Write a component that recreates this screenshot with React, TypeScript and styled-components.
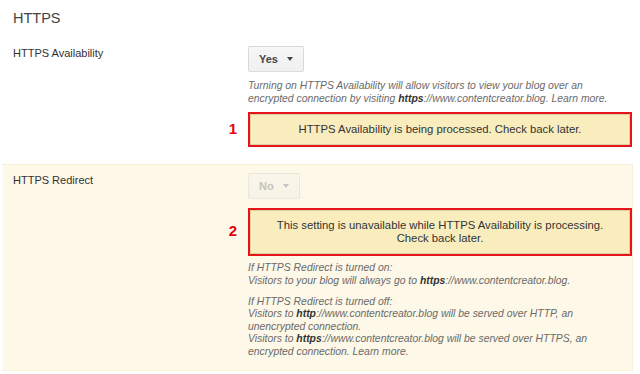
import React, { FC, ReactNode } from 'react'
import styled, { createGlobalStyle } from 'styled-components'

const GlobalStyle = createGlobalStyle`
    body {
        margin: 0;
        background: #fff;
        font-family: "Liberation Sans", Arial, sans-serif;
    }
`

const Page = styled.div`
    width: 630px;
    padding: 9px 7px 0 3px;
`

const Title = styled.h2`
    margin: 0 0 10px 10px;
    font-size: 14.5px;
    line-height: 18px;
    font-weight: normal;
    color: #444;
`

const Row = styled.section<{ $shaded?: boolean }>`
    display: grid;
    grid-template-columns: 245px 384px;
    padding: 8px 0 ${p => (p.$shaded ? '12px' : '16px')};
    background: ${p => (p.$shaded ? '#fdf8e7' : 'transparent')};
    border: 1px dotted ${p => (p.$shaded ? '#efe6cc' : 'transparent')};
    border-left: none;
`

const Label = styled.div`
    padding: 1px 0 0 10px;
    font-size: 11px;
    line-height: 13px;
    color: #333;
`

const Control = styled.div`
    display: flex;
    flex-direction: column;
    align-items: flex-start;
`

const Select = styled.button<{ $disabled?: boolean }>`
    display: inline-flex;
    align-items: center;
    gap: 9px;
    height: 26px;
    padding: 0 10px;
    border: 1px solid ${p => (p.$disabled ? 'rgba(0,0,0,0.05)' : 'rgba(0,0,0,0.1)')};
    border-radius: 2px;
    background: ${p => (p.$disabled ? 'linear-gradient(#faf6ea, #f6f2e6)' : 'linear-gradient(#f6f6f6, #f0f0f0)')};
    font-family: inherit;
    font-size: 11px;
    font-weight: bold;
    color: ${p => (p.$disabled ? '#c4c4c0' : '#444')};
`

const Caret = styled.span`
    width: 0;
    height: 0;
    border-left: 3px solid transparent;
    border-right: 3px solid transparent;
    border-top: 4px solid currentColor;
`

const Help = styled.div<{ $gap: number }>`
    max-width: 374px;
    margin-top: ${p => p.$gap}px;
    font-size: 10.4px;
    line-height: 12.5px;
    font-style: italic;
    color: #6a6a6a;

    p {
        margin: 0 0 8.5px;
    }
    p:last-child {
        margin: 0;
    }
    b {
        display: inline-block;
        line-height: 12.5px;
        color: #333;
    }
`

const Notice = styled.div<{ $gap: number }>`
    position: relative;
    align-self: stretch;
    margin-top: ${p => p.$gap}px;
    padding: 9px 14px;
    border: 2px solid #e8141a;
    box-shadow: inset 0 0 0 1px #d9d0a4;
    background: #f9edbe;
    text-align: center;
    font-size: 11.3px;
    line-height: 13px;
    color: #333;
`

const Marker = styled.span`
    position: absolute;
    right: calc(100% + 13px);
    top: 50%;
    transform: translateY(-62%);
    font-size: 15px;
    font-weight: bold;
    color: #e3000f;
`

type NoticeBoxProps = {
    num: string,
    gap: number,
    children: ReactNode
}

const NoticeBox: FC<NoticeBoxProps> = ({ num, gap, children }) => (
    <Notice $gap={gap}>
        <Marker>{num}</Marker>
        {children}
    </Notice>
)

const App: FC = () => {
    return (
        <Page>
            <GlobalStyle />
            <Title>HTTPS</Title>

            <Row>
                <Label>HTTPS Availability</Label>
                <Control>
                    <Select>Yes <Caret /></Select>
                    <Help $gap={8}>
                        Turning on HTTPS Availability will allow visitors to view your blog over an
                        encrypted connection by visiting <b>https</b>://www.contentcreator.blog. Learn more.
                    </Help>
                    <NoticeBox num="1" gap={7}>
                        HTTPS Availability is being processed. Check back later.
                    </NoticeBox>
                </Control>
            </Row>

            <Row $shaded>
                <Label>HTTPS Redirect</Label>
                <Control>
                    <Select $disabled disabled>No <Caret /></Select>
                    <NoticeBox num="2" gap={9}>
                        This setting is unavailable while HTTPS Availability is processing.
                        <br />Check back later.
                    </NoticeBox>
                    <Help $gap={6}>
                        <p>
                            If HTTPS Redirect is turned on:<br />
                            Visitors to your blog will always go to <b>https</b>://www.contentcreator.blog.
                        </p>
                        <p>
                            If HTTPS Redirect is turned off:<br />
                            Visitors to <b>http</b>://www.contentcreator.blog will be served over HTTP, an
                            unencrypted connection.<br />
                            Visitors to <b>https</b>://www.contentcreator.blog will be served over HTTPS, an
                            encrypted connection. Learn more.
                        </p>
                    </Help>
                </Control>
            </Row>
        </Page>
    )
}

export default App
